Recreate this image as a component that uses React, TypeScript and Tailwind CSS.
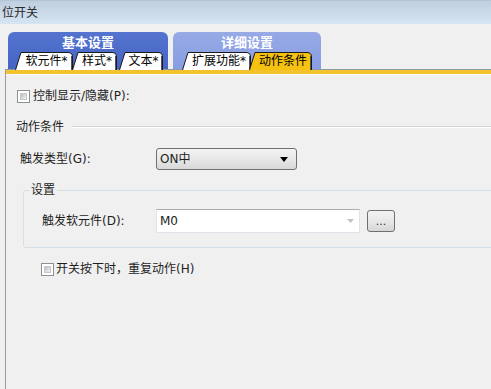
import React from "react";

function SubTab({ w, label, active, cls }: { w: number; label: string; active?: boolean; cls: string }) {
  const h = 18;
  const d = `M0.5,${h} L6,0.5 L${w - 5},0.5 Q${w - 0.5},0.5 ${w - 0.5},5 L${w - 0.5},${h}`;
  return (
    <div className={`relative h-[18px] flex items-center justify-center pl-[5px] text-[12px] text-black ${cls}`}>
      <svg className="absolute left-0 top-0" width={w} height={h} viewBox={`0 0 ${w} ${h}`}>
        <path d={d} fill={active ? "#f6c211" : "#ffffff"} stroke="#1a1a1a" strokeWidth="1" />
        <path d={`M${w - 1.5},4 L${w - 1.5},${h}`} stroke="#555" strokeWidth="1" />
      </svg>
      <span className="relative leading-none">{label}</span>
    </div>
  );
}

function Checkbox() {
  return (
    <span className="w-[13px] h-[13px] border border-[#8e8f8f] bg-white p-[2px] flex shrink-0">
      <span className="flex-1 bg-gradient-to-br from-[#b9bdc3] to-[#f4f4f4] border border-[#c4c8cc]" />
    </span>
  );
}

export default function App() {
  return (
    <div className="w-[491px] h-[389px] bg-[#f0f0f0] overflow-hidden font-['DejaVu_Sans','Noto_Sans_CJK_SC',sans-serif] text-[#1e1e1e] flex flex-col">
      <div className="h-[24px] shrink-0 bg-gradient-to-b from-[#bfcfdf] to-[#d6e5f2] flex items-center pl-[2px] text-[12px] text-[#2a2a2a] border-t border-[#b5c5d5]">
        位开关
      </div>
      <div className="h-[37px] mt-[8px] flex pl-[8px] gap-[5px] shrink-0">
        <div className="w-[160px] rounded-t-[6px] bg-gradient-to-b from-[#5474cf] to-[#4564c4] flex flex-col">
          <div className="h-[20px] flex items-center justify-center text-white font-bold text-[13px] pt-[2px]">基本设置</div>
          <div className="flex items-end pl-[7px]">
            <SubTab w={58} label="软元件*" cls="w-[58px]" />
            <SubTab w={45} label="样式*" cls="w-[45px] -ml-[1px]" />
            <SubTab w={44} label="文本*" cls="w-[44px] ml-[2px]" />
          </div>
        </div>
        <div className="w-[148px] rounded-t-[6px] bg-gradient-to-b from-[#97aae6] to-[#889ee2] flex flex-col">
          <div className="h-[20px] flex items-center justify-center text-white font-bold text-[13px] pt-[2px]">详细设置</div>
          <div className="flex items-end pl-[9px]">
            <SubTab w={69} label="扩展功能*" cls="w-[69px]" />
            <SubTab w={63} label="动作条件" active cls="w-[63px] -ml-[2px]" />
          </div>
        </div>
      </div>
      <div className="flex-1 ml-[5px] border-l border-[#9c9c9c] border-t border-t-[#8d9ba6] flex flex-col">
        <div className="h-[4px] bg-[#f3c22c]" />
        <div className="h-[1px] bg-[#fafafa]" />
        <div className="h-[16px] mt-[13px] flex items-center pl-[11px] gap-[3px] text-[12px]">
          <Checkbox />
          <span>控制显示/隐藏(P):</span>
        </div>
        <div className="h-[16px] mt-[15px] flex items-center pl-[10px] text-[12px]">
          <span>动作条件</span>
          <div className="flex-1 ml-[8px] h-[2px] border-t border-[#d5d5d5] border-b border-b-white" />
        </div>
        <div className="h-[22px] mt-[13px] flex items-center pl-[14px] text-[12px]">
          <span className="w-[136px]">触发类型(G):</span>
          <div className="w-[141px] h-[22px] border border-[#707070] rounded-[3px] bg-gradient-to-b from-[#f3f3f3] via-[#e8e8e8] to-[#d8d8d8] flex items-center pl-[3px] pr-[8px]">
            <span className="flex-1">ON中</span>
            <svg width="8" height="5" viewBox="0 0 8 5">
              <path d="M0,0 L8,0 L4,5 Z" fill="#000" />
            </svg>
          </div>
        </div>
        <div className="relative mt-[20px] ml-[17px] w-[500px] h-[58px] border border-[#d5dfe5] rounded-[3px] pt-[18px] pl-[18px] flex">
          <span className="absolute left-[5px] -top-[9px] px-[2px] bg-[#f0f0f0] text-[12px] leading-[16px]">设置</span>
          <div className="flex items-start text-[12px]">
            <span className="w-[114px] h-[24px] flex items-center">触发软元件(D):</span>
            <div className="w-[204px] h-[24px] bg-white border border-[#e2e3ea] border-t-[#abadb3] flex items-center pl-[3px] pr-[5px]">
              <span className="flex-1">M0</span>
              <svg width="7" height="4" viewBox="0 0 7 4">
                <path d="M0,0 L7,0 L3.5,4 Z" fill="#c3c3c3" />
              </svg>
            </div>
            <div className="ml-[7px] mt-[1px] w-[28px] h-[22px] border border-[#707070] rounded-[3px] bg-gradient-to-b from-[#f3f3f3] via-[#e8e8e8] to-[#d6d6d6] flex items-end justify-center pb-[4px] text-[11px] leading-none text-[#333]">
              ...
            </div>
          </div>
        </div>
        <div className="h-[16px] mt-[13px] flex items-center pl-[35px] gap-[2px] text-[12px]">
          <Checkbox />
          <span>开关按下时，重复动作(H)</span>
        </div>
      </div>
    </div>
  );
}
